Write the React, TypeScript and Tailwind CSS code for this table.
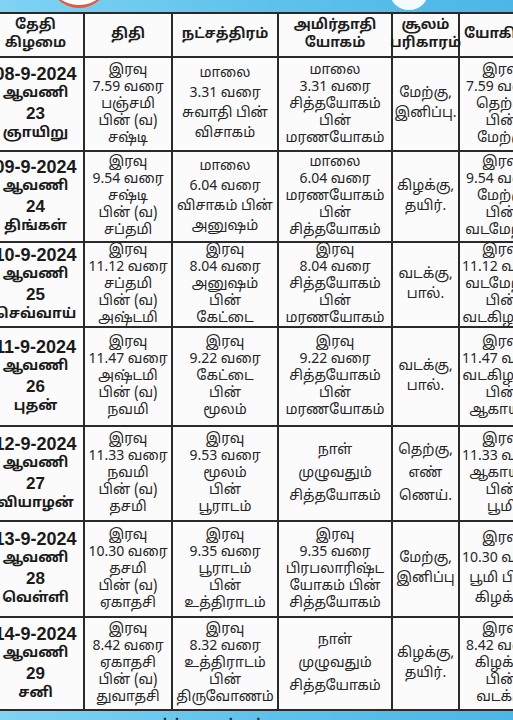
import type { ReactNode } from 'react'

type Row = {
  date: string
  month: string
  day: string
  week: string
  h: string
  thithi: string[]
  star: string[]
  amirtha: string[]
  soolam: string[]
  yogini: string[]
}

const rows: Row[] = [
  {
    date: '08-9-2024',
    month: 'ஆவணி',
    day: '23',
    week: 'ஞாயிறு',
    h: 'h-[94px]',
    thithi: ['இரவு', '7.59 வரை', 'பஞ்சமி', 'பின் (வ)', 'சஷ்டி'],
    star: ['மாலை', '3.31 வரை', 'சுவாதி பின்', 'விசாகம்'],
    amirtha: ['மாலை', '3.31 வரை', 'சித்தயோகம்', 'பின்', 'மரணயோகம்'],
    soolam: ['மேற்கு,', 'இனிப்பு.'],
    yogini: ['இரவு', '7.59 வரை', 'தெற்கு', 'பின்', 'மேற்கு'],
  },
  {
    date: '09-9-2024',
    month: 'ஆவணி',
    day: '24',
    week: 'திங்கள்',
    h: 'h-[91px]',
    thithi: ['இரவு', '9.54 வரை', 'சஷ்டி', 'பின் (வ)', 'சப்தமி'],
    star: ['மாலை', '6.04 வரை', 'விசாகம் பின்', 'அனுஷம்'],
    amirtha: ['மாலை', '6.04 வரை', 'மரணயோகம்', 'பின்', 'சித்தயோகம்'],
    soolam: ['கிழக்கு,', 'தயிர்.'],
    yogini: ['இரவு', '9.54 வரை', 'மேற்கு', 'பின்', 'வடமேற்கு'],
  },
  {
    date: '10-9-2024',
    month: 'ஆவணி',
    day: '25',
    week: 'செவ்வாய்',
    h: 'h-[85px]',
    thithi: ['இரவு', '11.12 வரை', 'சப்தமி', 'பின் (வ)', 'அஷ்டமி'],
    star: ['இரவு', '8.04 வரை', 'அனுஷம்', 'பின்', 'கேட்டை'],
    amirtha: ['இரவு', '8.04 வரை', 'சித்தயோகம்', 'பின்', 'மரணயோகம்'],
    soolam: ['வடக்கு,', 'பால்.'],
    yogini: ['இரவு', '11.12 வரை', 'வடமேற்கு', 'பின்', 'வடகிழக்கு'],
  },
  {
    date: '11-9-2024',
    month: 'ஆவணி',
    day: '26',
    week: 'புதன்',
    h: 'h-[99px]',
    thithi: ['இரவு', '11.47 வரை', 'அஷ்டமி', 'பின் (வ)', 'நவமி'],
    star: ['இரவு', '9.22 வரை', 'கேட்டை', 'பின்', 'மூலம்'],
    amirtha: ['இரவு', '9.22 வரை', 'சித்தயோகம்', 'பின்', 'மரணயோகம்'],
    soolam: ['வடக்கு,', 'பால்.'],
    yogini: ['இரவு', '11.47 வரை', 'வடகிழக்கு', 'பின்', 'ஆகாயம்'],
  },
  {
    date: '12-9-2024',
    month: 'ஆவணி',
    day: '27',
    week: 'வியாழன்',
    h: 'h-[95px]',
    thithi: ['இரவு', '11.33 வரை', 'நவமி', 'பின் (வ)', 'தசமி'],
    star: ['இரவு', '9.53 வரை', 'மூலம்', 'பின்', 'பூராடம்'],
    amirtha: ['நாள்', 'முழுவதும்', 'சித்தயோகம்'],
    soolam: ['தெற்கு,', 'எண்', 'ணெய்.'],
    yogini: ['இரவு', '11.33 வரை', 'ஆகாயம்', 'பின்', 'பூமி'],
  },
  {
    date: '13-9-2024',
    month: 'ஆவணி',
    day: '28',
    week: 'வெள்ளி',
    h: 'h-[96px]',
    thithi: ['இரவு', '10.30 வரை', 'தசமி', 'பின் (வ)', 'ஏகாதசி'],
    star: ['இரவு', '9.35 வரை', 'பூராடம்', 'பின்', 'உத்திராடம்'],
    amirtha: ['இரவு', '9.35 வரை', 'பிரபலாரிஷ்ட', 'யோகம் பின்', 'சித்தயோகம்'],
    soolam: ['மேற்கு,', 'இனிப்பு'],
    yogini: ['இரவு', '10.30 வரை', 'பூமி பின்', 'கிழக்கு'],
  },
  {
    date: '14-9-2024',
    month: 'ஆவணி',
    day: '29',
    week: 'சனி',
    h: 'h-[93px]',
    thithi: ['இரவு', '8.42 வரை', 'ஏகாதசி', 'பின் (வ)', 'துவாதசி'],
    star: ['இரவு', '8.32 வரை', 'உத்திராடம்', 'பின்', 'திருவோணம்'],
    amirtha: ['நாள்', 'முழுவதும்', 'சித்தயோகம்'],
    soolam: ['கிழக்கு,', 'தயிர்.'],
    yogini: ['இரவு', '8.42 வரை', 'கிழக்கு', 'பின்', 'வடக்கு'],
  },
]

const widths = ['w-[97px]', 'w-[88px]', 'w-[106px]', 'w-[114px]', 'w-[67px]', 'w-[85px]']

const leadingFor: Record<number, string> = {
  1: 'leading-[20px]',
  2: 'leading-[20px]',
  3: 'leading-[23px]',
  4: 'leading-[20px]',
  5: 'leading-[17px]',
}

const latin = { fontFamily: '"Liberation Sans", Arial, sans-serif' }

function Cell({ col, children, className = '' }: { col: number; children: ReactNode; className?: string }) {
  return (
    <div
      className={`${widths[col]} shrink-0 h-full border-r-2 border-[#2a2a2a] flex flex-col items-center justify-center text-center whitespace-nowrap ${className}`}
    >
      {children}
    </div>
  )
}

function Lines({ col, lines }: { col: number; lines: string[] }) {
  return (
    <Cell col={col} className={`text-[14px] text-[#262626] ${leadingFor[lines.length]}`}>
      {lines.map((l, i) => (
        <div key={i}>{l}</div>
      ))}
    </Cell>
  )
}

export default function App() {
  return (
    <div
      className="relative w-[513px] h-[720px] overflow-hidden bg-[#fbfbfb]"
      style={{ fontFamily: '"Noto Sans Tamil", "Lohit Tamil", "Liberation Sans", "Noto Sans", sans-serif' }}
    >
      {/* blue banner strip with the bottoms of the header logos */}
      <div className="relative h-[12px] bg-gradient-to-r from-[#7fd3f3] via-[#5fc2ec] to-[#4cb6e6] overflow-hidden">
        <div className="absolute left-[49px] top-[-52px] w-[60px] h-[60px] rounded-full bg-white border-b-[3px] border-[#e8583a]" />
        <div className="absolute left-[389px] top-[-30px] w-[40px] h-[40px] rounded-full bg-[#f4fbff]" />
      </div>

      <div className="ml-[-12px] w-[570px] border-t-2 border-[#2a2a2a]">
        <div className="flex h-[44px] border-b-2 border-[#2a2a2a] font-bold text-[14px] leading-[18px] text-[#1e1e1e]">
          <Cell col={0}>
            <div>தேதி</div>
            <div>கிழமை</div>
          </Cell>
          <Cell col={1}>திதி</Cell>
          <Cell col={2}>நட்சத்திரம்</Cell>
          <Cell col={3}>
            <div>அமிர்தாதி</div>
            <div>யோகம்</div>
          </Cell>
          <Cell col={4}>
            <div>சூலம்</div>
            <div>பரிகாரம்</div>
          </Cell>
          <Cell col={5}>யோகினி</Cell>
        </div>

        {rows.map(r => (
          <div key={r.date} className={`flex ${r.h} border-b-2 border-[#2a2a2a]`}>
            <Cell col={0} className="font-bold text-[#1a1a1a] leading-[20px]">
              <div className="text-[18px]" style={latin}>
                {r.date}
              </div>
              <div className="text-[14px]">{r.month}</div>
              <div className="text-[17px]" style={latin}>
                {r.day}
              </div>
              <div className="text-[14px]">{r.week}</div>
            </Cell>
            <Lines col={1} lines={r.thithi} />
            <Lines col={2} lines={r.star} />
            <Lines col={3} lines={r.amirtha} />
            <Lines col={4} lines={r.soolam} />
            <Lines col={5} lines={r.yogini} />
          </div>
        ))}
      </div>

      <div className="h-[20px] bg-gradient-to-r from-[#7fd3f3] via-[#5fc2ec] to-[#4cb6e6] pl-[92px] pt-[3px]">
        <span className="text-[15px] font-bold text-[#1d2a33]">சுபமுகூர்த்த நாட்கள்</span>
      </div>
    </div>
  )
}
